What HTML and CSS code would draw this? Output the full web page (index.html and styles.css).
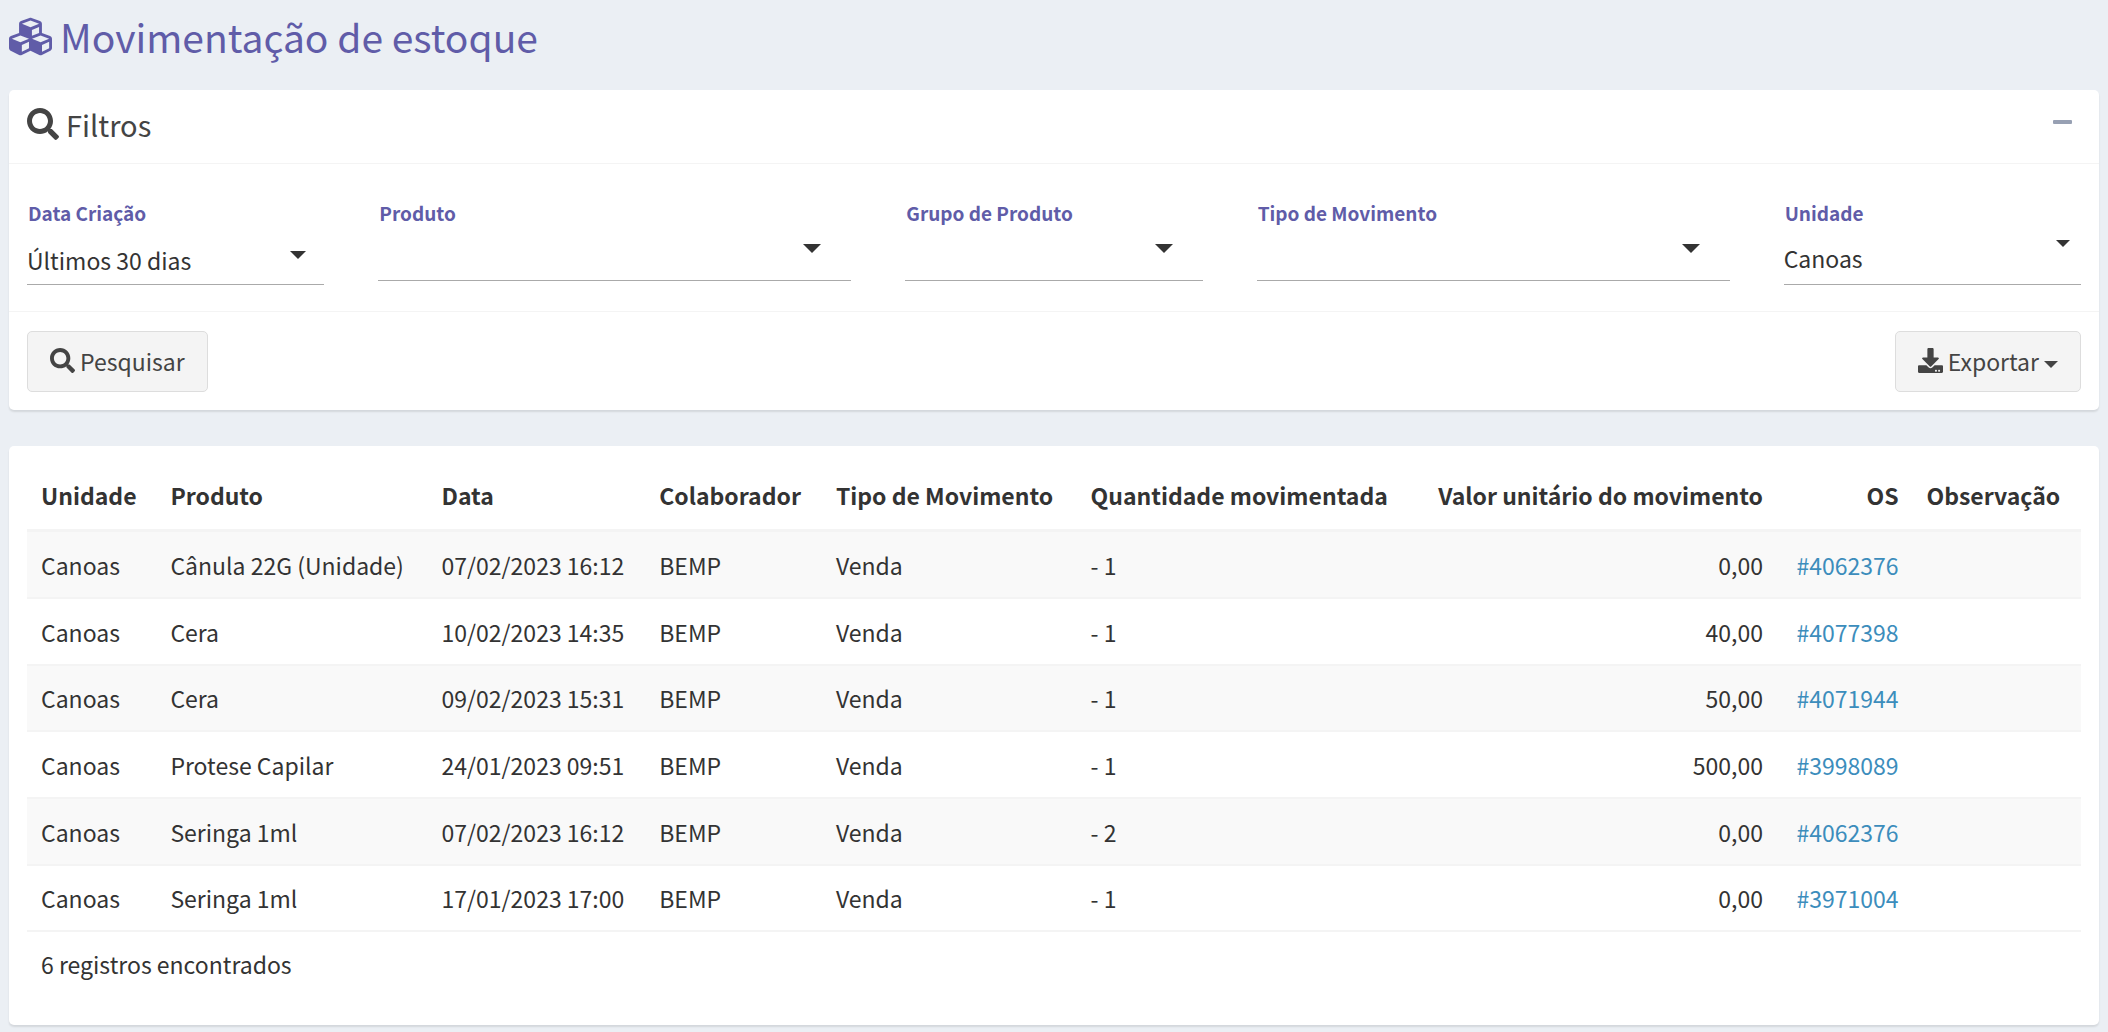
FILE: index.html
```html
<!DOCTYPE html>
<html lang="pt-BR">
<head>
<meta charset="utf-8">
<meta name="viewport" content="width=device-width, initial-scale=1">
<title>Movimentação de estoque</title>
<link rel="stylesheet" href="styles.css">
</head>
<body>
<svg class="sprite" aria-hidden="true">
  <symbol id="i-search" viewBox="0 0 512 512"><path d="M505 442.7L405.3 343c-4.5-4.5-10.6-7-17-7H372c27.6-35.3 44-79.7 44-128C416 93.1 322.9 0 208 0S0 93.1 0 208s93.1 208 208 208c48.3 0 92.7-16.4 128-44v16.3c0 6.4 2.5 12.5 7 17l99.7 99.7c9.4 9.4 24.6 9.4 33.9 0l28.3-28.3c9.4-9.4 9.4-24.6.1-34zM208 336c-70.7 0-128-57.2-128-128 0-70.7 57.2-128 128-128 70.7 0 128 57.2 128 128 0 70.7-57.2 128-128 128z"/></symbol>
  <symbol id="i-download" viewBox="0 0 512 512"><path d="M216 0h80c13.3 0 24 10.7 24 24v168h87.7c17.8 0 26.7 21.5 14.1 34.1L269.7 378.3c-7.5 7.5-19.8 7.5-27.3 0L90.1 226.1c-12.6-12.6-3.7-34.1 14.1-34.1H192V24c0-13.3 10.7-24 24-24zm296 376v112c0 13.3-10.7 24-24 24H24c-13.3 0-24-10.7-24-24V376c0-13.3 10.7-24 24-24h146.7l49 49c20.1 20.1 52.5 20.1 72.6 0l49-49H488c13.3 0 24 10.7 24 24zm-124 88c0-11-9-20-20-20s-20 9-20 20 9 20 20 20 20-9 20-20zm64 0c0-11-9-20-20-20s-20 9-20 20 9 20 20 20 20-9 20-20z"/></symbol>
  <symbol id="i-cubes" viewBox="0 0 512 512"><path d="M488.6 250.2L392 214V105.5c0-15-9.3-28.4-23.4-33.7l-100-37.5c-8.1-3.1-17.1-3.1-25.3 0l-100 37.5c-14.1 5.3-23.4 18.7-23.4 33.7V214l-96.6 36.2C9.3 255.5 0 268.9 0 283.9V394c0 13.6 7.7 26.1 19.9 32.2l100 50c10.1 5.1 22.1 5.1 32.2 0l103.9-52 103.9 52c10.1 5.1 22.1 5.1 32.2 0l100-50c12.2-6.1 19.9-18.6 19.9-32.2V283.9c0-15-9.3-28.4-23.4-33.7zM358 214.8l-85 31.9v-68.2l85-37v73.3zM154 104.1l102-38.2 102 38.2v.6l-102 41.4-102-41.4v-.6zm84 291.1l-85 42.5v-79.1l85-38.8v75.4zm0-112l-102 41.4-102-41.4v-.6l102-38.2 102 38.2v.6zm240 112l-85 42.5v-79.1l85-38.8v75.4zm0-112l-102 41.4-102-41.4v-.6l102-38.2 102 38.2v.6z"/></symbol>
</svg>

<header class="page-header">
  <svg class="icon icon-xl" aria-hidden="true"><use href="#i-cubes"/></svg>
  <h1 class="page-title">Movimentação de estoque</h1>
</header>

<main class="content">
  <form class="box">
    <div class="box-header">
      <svg class="icon icon-lg" aria-hidden="true"><use href="#i-search"/></svg>
      <h2 class="box-title">Filtros</h2>
      <button class="collapse" type="button" aria-label="Recolher"></button>
    </div>
    <div class="filters">
      <div class="field">
        <label for="data">Data Criação</label>
        <div class="picker picker-date"><select id="data"><option>Últimos 30 dias</option></select></div>
      </div>
      <div class="field field-wide">
        <label for="produto">Produto</label>
        <div class="picker"><select id="produto"><option></option></select></div>
      </div>
      <div class="field">
        <label for="grupo">Grupo de Produto</label>
        <div class="picker"><select id="grupo"><option></option></select></div>
      </div>
      <div class="field field-wide">
        <label for="tipo">Tipo de Movimento</label>
        <div class="picker"><select id="tipo"><option></option></select></div>
      </div>
      <div class="field">
        <label for="unidade">Unidade</label>
        <div class="picker picker-unit"><select id="unidade"><option>Canoas</option></select></div>
      </div>
    </div>
    <div class="box-footer">
      <button class="btn" type="button"><svg class="icon" aria-hidden="true"><use href="#i-search"/></svg><span>Pesquisar</span></button>
      <button class="btn" type="button"><svg class="icon" aria-hidden="true"><use href="#i-download"/></svg><span>Exportar</span><i class="caret"></i></button>
    </div>
  </form>

  <section class="box results">
    <table class="table">
      <colgroup>
        <col class="c-unit"><col class="c-product"><col class="c-date"><col class="c-staff"><col class="c-type"><col class="c-qty"><col class="c-value"><col class="c-os"><col class="c-note">
      </colgroup>
      <thead>
        <tr><th>Unidade</th><th>Produto</th><th>Data</th><th>Colaborador</th><th>Tipo de Movimento</th><th>Quantidade movimentada</th><th class="num">Valor unitário do movimento</th><th class="num">OS</th><th>Observação</th></tr>
      </thead>
      <tbody>
        <tr><td>Canoas</td><td>Cânula 22G (Unidade)</td><td>07/02/2023 16:12</td><td>BEMP</td><td>Venda</td><td>- 1</td><td class="num">0,00</td><td class="num"><a href="#">#4062376</a></td><td></td></tr>
        <tr><td>Canoas</td><td>Cera</td><td>10/02/2023 14:35</td><td>BEMP</td><td>Venda</td><td>- 1</td><td class="num">40,00</td><td class="num"><a href="#">#4077398</a></td><td></td></tr>
        <tr><td>Canoas</td><td>Cera</td><td>09/02/2023 15:31</td><td>BEMP</td><td>Venda</td><td>- 1</td><td class="num">50,00</td><td class="num"><a href="#">#4071944</a></td><td></td></tr>
        <tr><td>Canoas</td><td>Protese Capilar</td><td>24/01/2023 09:51</td><td>BEMP</td><td>Venda</td><td>- 1</td><td class="num">500,00</td><td class="num"><a href="#">#3998089</a></td><td></td></tr>
        <tr><td>Canoas</td><td>Seringa 1ml</td><td>07/02/2023 16:12</td><td>BEMP</td><td>Venda</td><td>- 2</td><td class="num">0,00</td><td class="num"><a href="#">#4062376</a></td><td></td></tr>
        <tr><td>Canoas</td><td>Seringa 1ml</td><td>17/01/2023 17:00</td><td>BEMP</td><td>Venda</td><td>- 1</td><td class="num">0,00</td><td class="num"><a href="#">#3971004</a></td><td></td></tr>
      </tbody>
      <tfoot>
        <tr><td colspan="9">6 registros encontrados</td></tr>
      </tfoot>
    </table>
  </section>
</main>
</body>
</html>
```

FILE: styles.css
```css
* { box-sizing: border-box; }

body {
  margin: 0;
  background: #ebeff4;
  color: #333;
  font-family: "Noto Sans CJK SC", "Source Sans Pro", sans-serif;
  font-size: 23px;
  line-height: 32px;
}

button, select { font: inherit; color: inherit; }

.sprite { display: none; }

.icon {
  width: 25px;
  height: 25px;
  flex: none;
  fill: currentColor;
}
.icon-lg { width: 32px; height: 32px; }
.icon-xl { width: 43px; height: 43px; }

.page-header {
  display: flex;
  align-items: center;
  gap: 8px;
  padding: 6px 9px 24px;
  color: #605ca8;
}
.page-title {
  margin: 0;
  font-size: 39px;
  font-weight: 400;
  line-height: 60px;
}

.content { padding: 0 9px; }

.box {
  margin-bottom: 36px;
  background: #fff;
  border-radius: 5px;
  box-shadow: 0 2px 2px rgba(0, 0, 0, .1);
}

.box-header {
  display: flex;
  align-items: center;
  gap: 7px;
  padding: 14px 27px 19px 18px;
  border-bottom: 1px solid #f4f4f4;
  color: #444;
}
.box-title {
  margin: 0;
  font-size: 29px;
  font-weight: 400;
  line-height: 40px;
}
.collapse {
  width: 19px;
  height: 4px;
  margin: 0 0 4px auto;
  padding: 0;
  border: 0;
  border-radius: 1px;
  background: #97a0b3;
}

.filters {
  display: grid;
  grid-template-columns: repeat(12, 1fr);
  column-gap: 54px;
  padding: 35px 18px 25px;
}
.field { grid-column: span 2; min-width: 0; }
.field-wide { grid-column: span 3; }
.field label {
  display: block;
  padding-left: 1px;
  color: #605ca8;
  font-size: 19px;
  font-weight: 700;
  line-height: 28px;
}

.picker { position: relative; margin-top: 1px; }
.picker select {
  display: block;
  width: 100%;
  height: 53px;
  padding: 0;
  border: 0;
  border-bottom: 1px solid #aaa;
  border-radius: 0;
  background: transparent;
  appearance: none;
}
.picker::after {
  content: "";
  position: absolute;
  top: 16px;
  right: 30px;
  border: 9px solid transparent;
  border-top-color: #333;
  border-bottom: 0;
}
.picker-date select { height: 57px; padding-top: 8px; }
.picker-unit select { height: 57px; padding-top: 4px; }
.picker-date::after { top: 23px; right: 18px; border-width: 8px 8px 0; }
.picker-unit::after { top: 12px; right: 11px; border-width: 7px 7px 0; }

.box-footer {
  display: flex;
  justify-content: space-between;
  padding: 19px 18px 18px;
  border-top: 1px solid #f4f4f4;
}
.filters + .box-footer { margin-top: 1px; }
.btn {
  display: flex;
  align-items: center;
  gap: 5px;
  height: 61px;
  padding: 0 22px 2px;
  border: 1px solid #ddd;
  border-radius: 5px;
  background: #f4f4f4;
  color: #444;
}
.caret {
  margin-top: 7px;
  border: 7px solid transparent;
  border-top-color: #444;
  border-bottom: 0;
}

.results { margin-bottom: 9px; padding: 18px 18px 26px; }

.table {
  width: 100%;
  table-layout: fixed;
  border-collapse: separate;
  border-spacing: 0;
}
.table th,
.table td { height: 67px; padding: 0 14px; text-align: left; white-space: nowrap; }
.table .num { text-align: right; }
.table th { height: 68px; padding-bottom: 3px; border-bottom: 3px solid #f4f4f4; font-weight: 700; }
.table tbody td { border-bottom: 2px solid #f4f4f4; }
.table tbody tr:nth-child(3n) td { height: 66px; }
.table tbody tr:nth-child(odd) { background: #f9f9f9; }
.table tfoot td { padding-bottom: 3px; }
.table a { color: #3c8dbc; text-decoration: none; }

.c-unit { width: 6.3%; }
.c-product { width: 13.2%; }
.c-date { width: 10.6%; }
.c-staff { width: 8.6%; }
.c-type { width: 12.4%; }
.c-qty { width: 16.4%; }
.c-value { width: 17.7%; }
.c-os { width: 6.6%; }
.c-note { width: 8.2%; }
```
